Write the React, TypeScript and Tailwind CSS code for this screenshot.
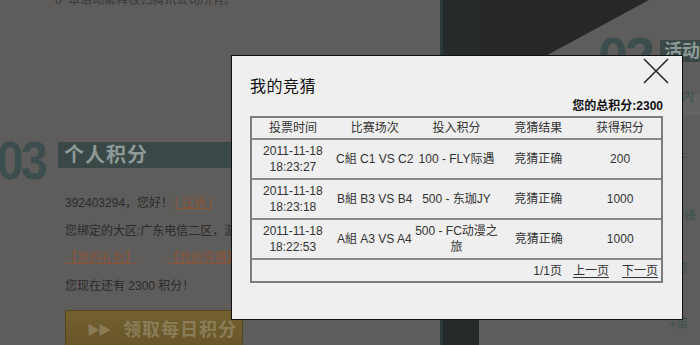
import React from "react";

const rows = [
  { date: "2011-11-18", time: "18:23:27", match: "C組 C1 VS C2", bet: ["100 - FLY际遇"], result: "竞猜正确", gain: "200" },
  { date: "2011-11-18", time: "18:23:18", match: "B組 B3 VS B4", bet: ["500 - 东珈JY"], result: "竞猜正确", gain: "1000" },
  { date: "2011-11-18", time: "18:22:53", match: "A組 A3 VS A4", bet: ["500 - FC动漫之", "旅"], result: "竞猜正确", gain: "1000" },
];

const heads = ["投票时间", "比赛场次", "投入积分", "竞猜结果", "获得积分"];

const font = { fontFamily: '"Liberation Sans", "Noto Sans CJK SC", sans-serif' };

const Modal = () => {
  return (
    <div className="absolute left-[231px] top-[55px] w-[452px] h-[265px] bg-[#efefef] border border-[#111] flex flex-col pl-[18px] pr-[19px] text-[#222]">
      <button className="absolute right-[13px] top-[2px] w-[26px] h-[26px]">
        <svg viewBox="0 0 26 26" className="w-full h-full">
          <path d="M1 1 L25 25 M25 1 L1 25" stroke="#2a2a2a" strokeWidth="1.6" fill="none" />
        </svg>
      </button>
      <h2 className="mt-[21px] text-[16px] leading-[20px] font-normal tracking-[0.5px] text-[#111]">我的竞猜</h2>
      <div className="mt-[1px] text-right text-[12px] leading-[16px] font-bold text-[#111]">您的总积分:2300</div>
      <div className="mt-[2px] border-2 border-[#7c7c7c] text-[12px]">
        <div className="flex h-[22px] items-center border-b-2 border-[#8a8a8a] text-[#333]">
          {heads.map((h) => (
            <div key={h} className="flex-1 text-center">{h}</div>
          ))}
        </div>
        {rows.map((r) => (
          <div key={r.time} className="flex h-[40px] items-center leading-[16px] border-b-2 border-[#8a8a8a] text-[#333]">
            <p className="flex-1 text-center">
              {r.date}
              <br />
              {r.time}
            </p>
            <p className="flex-1 text-center">{r.match}</p>
            <div className="flex-1 flex flex-col items-center">
              {r.bet.map((b, i) => (
                <p key={i} className="whitespace-nowrap text-center">{b}</p>
              ))}
            </div>
            <p className="flex-1 text-center">{r.result}</p>
            <p className="flex-1 text-center">{r.gain}</p>
          </div>
        ))}
        <div className="h-[21px] flex items-center justify-end gap-[10px] pr-[3px] text-[#333]">
          <span>1/1页</span>
          <a className="underline underline-offset-2 ml-[1px]">上一页</a>
          <a className="underline underline-offset-2 ml-[3px]">下一页</a>
        </div>
      </div>
    </div>
  );
};

const App = () => {
  return (
    <div className="relative w-[700px] h-[345px] overflow-hidden bg-[#5e5d5c] text-[#2b2b2b]" style={font}>
      <div className="flex h-full">
        {/* left column */}
        <div className="w-[452px] flex flex-col">
          <p className="mt-[-8px] ml-[55px] text-[12px] leading-[16px] text-[#3a3a3a]">
            0&nbsp;&nbsp;本活动解释权归腾讯公司所有。
          </p>
          <div className="mt-[132px] flex items-start">
            <span className="ml-[-6px] text-[54px] leading-[40px] font-bold text-[#3b4d4c] tracking-[-3px] scale-x-90">03</span>
            <div className="ml-[10px] mt-[2px] flex-1 h-[26px] bg-[#3a4947] flex items-center pl-[6px]">
              <span className="text-[20px] font-bold text-[#8e9a98] tracking-[1px]">个人积分</span>
            </div>
          </div>
          <div className="ml-[65px] mt-[15px] flex flex-col text-[12px] leading-[16px]">
            <p>
              392403294，您好！
              <a className="underline text-[#8a5538] ml-[2px]">[ 注销 ]</a>
            </p>
            <p className="mt-[12px]">您绑定的大区:广东电信二区，游戏角色</p>
            <div className="mt-[11px] flex gap-[30px] text-[#8a5538]">
              <a className="underline">【我的礼包】</a>
              <a className="underline">【我的竞猜】</a>
            </div>
            <p className="mt-[12px]">您现在还有 2300 积分！</p>
            <div className="mt-[16px] w-[178px] h-[40px] rounded-[2px] bg-gradient-to-b from-[#74612f] to-[#665429] border border-[#55461f] flex items-center pl-[21px] text-[#8b7c58] font-bold">
              <span className="text-[13px] tracking-[-2px]">▶▶</span>
              <span className="ml-[14px] text-[18px] tracking-[1px]">领取每日积分</span>
            </div>
          </div>
        </div>

        {/* dark strip */}
        <div className="w-[40px] h-full bg-[#262a2a] border-l-[3px] border-[#2c3a3a]" />

        {/* right column */}
        <div className="relative flex-1 flex flex-col text-[12px] leading-[16px] text-[#3e5352]">
          <svg className="absolute left-0 top-0" width="180" height="95" viewBox="0 0 180 95">
            <polygon points="0,0 170,0 0,92" fill="#262828" />
          </svg>
          <div className="relative mt-[36px] ml-[119px] flex items-start">
            <span className="text-[54px] leading-[40px] font-bold text-[#3b4d4c] tracking-[-3px]">02</span>
            <div className="ml-[8px] mt-[4px] w-[40px] h-[22px] bg-[#3a4947] flex items-center pl-[4px]">
              <span className="text-[18px] font-bold text-[#8e9a98]">活动</span>
            </div>
          </div>
          <div className="mt-[19px] ml-[188px] h-[20px] bg-[#646362] flex items-center pl-[3px]">具内容</div>
          <div className="ml-[190px] mt-[20px]">▶ +于</div>
          <div className="ml-[189px] mt-[41px]">-冲锋</div>
          <div className="ml-[190px] mt-[37px]">+苗</div>
          <div className="ml-[190px] mt-[39px]">+苗</div>
        </div>
      </div>
      <Modal />
    </div>
  );
};

export default App;
